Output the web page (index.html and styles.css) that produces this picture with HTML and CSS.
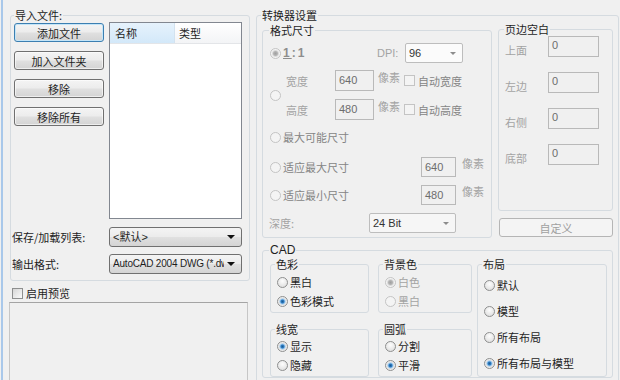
FILE: index.html
```html
<!DOCTYPE html>
<html>
  <head>
    <meta charset="UTF-8" />
    <title>转换器设置</title>
    <link rel="stylesheet" href="styles.css">
  </head>
  <body>
    <div class="window">
      <!-- 左侧：导入文件 -->
      <div class="left">
        <fieldset class="group import">
          <legend>导入文件:</legend>
          <div class="import-top">
            <div class="btns">
              <button class="btn btn-focus">添加文件</button>
              <button class="btn">加入文件夹</button>
              <button class="btn">移除</button>
              <button class="btn">移除所有</button>
            </div>
            <div class="list">
              <div class="list-head">
                <span class="col col-sort">名称</span>
                <span class="col">类型</span>
              </div>
            </div>
          </div>
          <div class="field-row first">
            <span class="field-label">保存/加载列表:</span>
            <div class="combo"><span class="combo-text">&lt;默认&gt;</span><span class="arrow"></span></div>
          </div>
          <div class="field-row">
            <span class="field-label">输出格式:</span>
            <div class="combo"><span class="combo-text narrow">AutoCAD 2004 DWG (*.dwg)</span><span class="arrow"></span></div>
          </div>
        </fieldset>
        <div class="preview-check"><span class="chk"></span>启用预览</div>
        <div class="preview"></div>
      </div>

      <!-- 右侧：转换器设置 -->
      <fieldset class="group conv">
        <legend>转换器设置</legend>
        <div class="conv-top">
          <fieldset class="group size">
            <legend>格式尺寸</legend>
            <div class="size-row row-ratio">
              <div class="ratio">
                <span class="radio radio-dis on"></span>
                <span class="ratio-text latin"><u>1</u>:1</span>
              </div>
              <span class="dim dpi-label latin">DPI:</span>
              <div class="combo combo-dis dpi"><span class="combo-text">96</span><span class="arrow"></span></div>
            </div>
            <div class="size-row row-wh">
              <span class="radio radio-dis"></span>
              <div class="wh">
                <div class="wh-line">
                  <span class="dim wh-label">宽度</span>
                  <span class="edit wh-edit">640</span>
                  <span class="dim unit">像素</span>
                  <span class="chk chk-dis"></span>
                  <span class="dim-dark">自动宽度</span>
                </div>
                <div class="wh-line">
                  <span class="dim wh-label">高度</span>
                  <span class="edit wh-edit">480</span>
                  <span class="dim unit">像素</span>
                  <span class="chk chk-dis"></span>
                  <span class="dim-dark">自动高度</span>
                </div>
              </div>
            </div>
            <div class="size-row row-max">
              <span class="radio radio-dis"></span>
              <span class="dim-dark">最大可能尺寸</span>
            </div>
            <div class="size-row row-fit">
              <span class="radio radio-dis"></span>
              <span class="dim-dark fit-label">适应最大尺寸</span>
              <span class="edit fit-edit">640</span>
              <span class="dim unit">像素</span>
            </div>
            <div class="size-row row-fit2">
              <span class="radio radio-dis"></span>
              <span class="dim-dark fit-label">适应最小尺寸</span>
              <span class="edit fit-edit">480</span>
              <span class="dim unit">像素</span>
            </div>
            <div class="size-row row-depth">
              <span class="dim depth-label">深度:</span>
              <div class="combo combo-dis depth"><span class="combo-text">24 Bit</span><span class="arrow"></span></div>
            </div>
          </fieldset>

          <div class="margins-col">
            <fieldset class="group margins">
              <legend>页边空白</legend>
              <div class="m-row"><span class="dim m-label">上面</span><span class="edit m-edit">0</span></div>
              <div class="m-row"><span class="dim m-label">左边</span><span class="edit m-edit">0</span></div>
              <div class="m-row"><span class="dim m-label">右侧</span><span class="edit m-edit">0</span></div>
              <div class="m-row"><span class="dim m-label">底部</span><span class="edit m-edit">0</span></div>
            </fieldset>
            <button class="btn btn-dis custom">自定义</button>
          </div>
        </div>

        <fieldset class="group cad">
          <legend class="latin">CAD</legend>
          <div class="cad-body">
            <div class="cad-col col-a">
              <fieldset class="group sub">
                <legend>色彩</legend>
                <div class="opt"><span class="radio"></span>黑白</div>
                <div class="opt"><span class="radio on"></span>色彩模式</div>
              </fieldset>
              <fieldset class="group sub sub-low">
                <legend>线宽</legend>
                <div class="opt"><span class="radio on"></span>显示</div>
                <div class="opt"><span class="radio"></span>隐藏</div>
              </fieldset>
            </div>
            <div class="cad-col col-b">
              <fieldset class="group sub">
                <legend>背景色</legend>
                <div class="opt dim"><span class="radio radio-dis on"></span>白色</div>
                <div class="opt dim"><span class="radio radio-dis"></span>黑白</div>
              </fieldset>
              <fieldset class="group sub sub-low">
                <legend>圆弧</legend>
                <div class="opt"><span class="radio"></span>分割</div>
                <div class="opt"><span class="radio on"></span>平滑</div>
              </fieldset>
            </div>
            <div class="cad-col col-c">
              <fieldset class="group sub layout">
                <legend>布局</legend>
                <div class="opt"><span class="radio"></span>默认</div>
                <div class="opt"><span class="radio"></span>模型</div>
                <div class="opt"><span class="radio"></span>所有布局</div>
                <div class="opt"><span class="radio on"></span>所有布局与模型</div>
              </fieldset>
            </div>
          </div>
        </fieldset>
      </fieldset>
    </div>
  </body>
</html>
```

FILE: styles.css
```css
* {
  box-sizing: border-box;
}

body {
  margin: 0;
  background: #f0f0f0;
  font-family: "Noto Sans CJK SC", sans-serif;
  font-size: 11px;
  line-height: 14px;
  color: #1e1e1e;
  overflow: hidden;
}

.latin,
.combo-text,
.edit {
  font-family: "Liberation Sans", "Noto Sans CJK SC", sans-serif;
}

.window {
  display: grid;
  grid-template-columns: 240px 363px;
  column-gap: 6px;
  align-items: start;
  height: 380px;
  margin-left: 1px;
  border-left: 2px solid #a9c8ea;
  padding: 8px 0 0 7px;
}

/* group box */
.group {
  margin: 0;
  padding: 0;
  border: 1px solid #d5dbe0;
  border-radius: 3px;
  min-width: 0;
}

.group > legend {
  padding: 0 1px;
  margin-left: 3px;
  line-height: 14px;
}

/* buttons */
.btn {
  display: block;
  width: 90px;
  height: 19px;
  padding: 0;
  border: 1px solid #707070;
  border-radius: 3px;
  background: linear-gradient(#f4f4f4 0%, #ececec 48%, #e0e0e0 52%, #d4d4d4 100%);
  box-shadow: inset 0 0 0 1px rgba(255, 255, 255, 0.6);
  font: inherit;
  line-height: 16px;
  color: #1e1e1e;
}

.btn-focus {
  border-color: #3c7fb1;
  box-shadow: inset 0 0 0 1px #c4e5f8;
}

.btn-dis {
  border-color: #b5b5b5;
  background: #f4f4f4;
  box-shadow: none;
  color: #a0a0a0;
}

/* combo */
.combo {
  display: flex;
  align-items: center;
  height: 20px;
  border: 1px solid #707070;
  border-radius: 3px;
  background: linear-gradient(#f4f4f4 0%, #ececec 48%, #e0e0e0 52%, #d4d4d4 100%);
  padding: 0 6px 0 3px;
}

.combo-text {
  flex: 1;
  overflow: hidden;
  white-space: nowrap;
  font-size: 11px;
}

.combo-text.narrow {
  font-size: 10px;
  letter-spacing: -0.2px;
}

.arrow {
  flex: none;
  width: 0;
  height: 0;
  margin-left: 3px;
  border-left: 4px solid transparent;
  border-right: 4px solid transparent;
  border-top: 4px solid #111;
}

.combo-dis {
  border-color: #bdbdbd;
  border-radius: 2px;
  background: #fbfbfb;
  color: #333;
}

.combo-dis .arrow {
  border-left-width: 3px;
  border-right-width: 3px;
  border-top: 3px solid #8c8c8c;
}

/* radio and checkbox */
.radio {
  flex: none;
  width: 11px;
  height: 11px;
  border: 1px solid #8e8f8f;
  border-radius: 50%;
  background: radial-gradient(circle at 50% 35%, #fdfdfd, #d9d9d9);
}

.radio.on {
  background: radial-gradient(circle, #1b5a93 0, #2f7cc0 1.5px, #9ccaf0 2.5px, #e4e4e4 3.5px, #f8f8f8 5px);
}

.radio-dis {
  border-color: #c4c4c4;
  background: #f4f4f4;
}

.radio-dis.on {
  background: radial-gradient(circle, #a0a0a0 0, #b4b4b4 2px, #dadada 3px, #f4f4f4 4px);
}

.chk {
  flex: none;
  width: 11px;
  height: 11px;
  border: 1px solid #8e8f8f;
  background: linear-gradient(135deg, #d6d6d6, #fbfbfb);
}

.chk-dis {
  border-color: #c4c4c4;
  background: #f4f4f4;
}

.edit {
  display: block;
  height: 21px;
  border: 1px solid #b9b9b9;
  background: #f0f0f0;
  color: #6d6d6d;
  padding: 0 3px;
  font-size: 11px;
  line-height: 19px;
}

.dim {
  color: #a3a3a3;
}

.dim-dark {
  color: #858585;
}

/* left panel */
.import {
  padding: 0 0 6px;
}

.import-top {
  display: flex;
  gap: 5px;
  padding-left: 3px;
}

.btns {
  display: flex;
  flex-direction: column;
  gap: 9px;
  padding-top: 1px;
}

.list {
  width: 133px;
  height: 197px;
  border: 1px solid #828790;
  background: #fff;
}

.list-head {
  display: flex;
  height: 21px;
  border-bottom: 1px solid #e3e5e8;
  background: linear-gradient(#ffffff, #f3f4f6);
}

.col {
  padding: 3px 0 0 4px;
}

.col-sort {
  width: 65px;
  padding-left: 5px;
  border-right: 1px solid #d3e2ef;
  background: linear-gradient(#e6f2fc, #d3e8f9);
}

.field-row {
  display: flex;
  align-items: center;
  margin-top: 7px;
}

.field-row.first {
  margin-top: 8px;
}

.field-label {
  width: 98px;
  padding-left: 1px;
}

.field-row .combo {
  width: 133px;
}

.preview-check {
  display: flex;
  align-items: center;
  gap: 3px;
  height: 14px;
  margin-top: 5px;
  padding-left: 2px;
}

.preview {
  width: 239px;
  height: 100px;
  margin: 2px 0 0 -1px;
  border: 1px solid #c6c6c6;
  border-top-color: #a4a4a4;
}

/* right panel */
.conv {
  width: 363px;
  height: 400px;
  padding: 0 0 0 5px;
}

.conv > legend {
  margin-left: -1px;
}

.conv-top {
  display: flex;
  align-items: flex-start;
  gap: 6px;
}

.size {
  width: 230px;
  margin-top: 1px;
  padding: 0 0 4px;
}

.size > legend {
  margin-left: 6px;
}

.size-row {
  display: flex;
  align-items: center;
  padding-left: 7px;
}

.row-ratio {
  height: 20px;
  margin-top: 6px;
}

.ratio {
  display: flex;
  align-items: center;
  gap: 2px;
  width: 107px;
}

.ratio-text {
  color: #8d8d8d;
  font-size: 12px;
  font-weight: bold;
  letter-spacing: 2px;
}

.dpi-label {
  width: 28px;
  font-size: 11px;
}

.dpi {
  width: 58px;
}

.row-wh {
  margin-top: 7px;
  gap: 5px;
}

.wh {
  display: flex;
  flex-direction: column;
  gap: 8px;
}

.wh-line {
  display: flex;
  align-items: center;
}

.wh-label {
  width: 49px;
}

.wh-edit {
  width: 39px;
}

.unit {
  align-self: flex-start;
  margin: 0 4px;
}

.wh-line .chk {
  margin-right: 3px;
}

.row-max {
  height: 14px;
  margin-top: 10px;
  gap: 2px;
}

.row-fit,
.row-fit2 {
  gap: 2px;
}

.row-fit {
  margin-top: 13px;
}

.row-fit2 {
  margin-top: 8px;
}

.row-fit .unit,
.row-fit2 .unit {
  margin-top: -1px;
}

.fit-label {
  width: 136px;
}

.fit-edit {
  width: 35px;
  height: 20px;
  line-height: 18px;
}

.row-depth {
  margin-top: 8px;
  padding-left: 6px;
}

.depth-label {
  width: 100px;
}

.depth {
  width: 87px;
  background: #f6f6f6;
}

.margins-col {
  width: 115px;
}

.margins {
  padding: 0 0 45px 6px;
}

.margins > legend {
  margin-left: -1px;
}

.m-row {
  display: flex;
  align-items: flex-end;
  margin-top: 15px;
}

.m-row:first-of-type {
  margin-top: 0;
}

.m-label {
  width: 43px;
}

.m-edit {
  width: 51px;
  line-height: 16px;
}

.custom {
  width: 114px;
  margin: 7px 0 0 1px;
}

/* CAD */
.cad {
  width: 351px;
  margin-top: 5px;
  padding: 0;
}

.cad > legend {
  margin-left: 6px;
  font-size: 12px;
}

.cad-body {
  display: flex;
  align-items: flex-start;
  padding-left: 7px;
}

.col-a {
  width: 99px;
}

.col-b {
  width: 94px;
  margin-left: 9px;
}

.col-c {
  width: 130px;
  margin-left: 5px;
}

.sub {
  display: flex;
  flex-direction: column;
  gap: 5px;
  padding: 4px 0 4px 6px;
}

.sub > legend {
  margin-left: -2px;
}

.sub-low {
  margin-top: 9px;
  padding-top: 3px;
}

.layout {
  gap: 12px;
  padding: 7px 0 6px 6px;
}

.opt {
  display: flex;
  align-items: center;
  gap: 2px;
  height: 14px;
}
```
